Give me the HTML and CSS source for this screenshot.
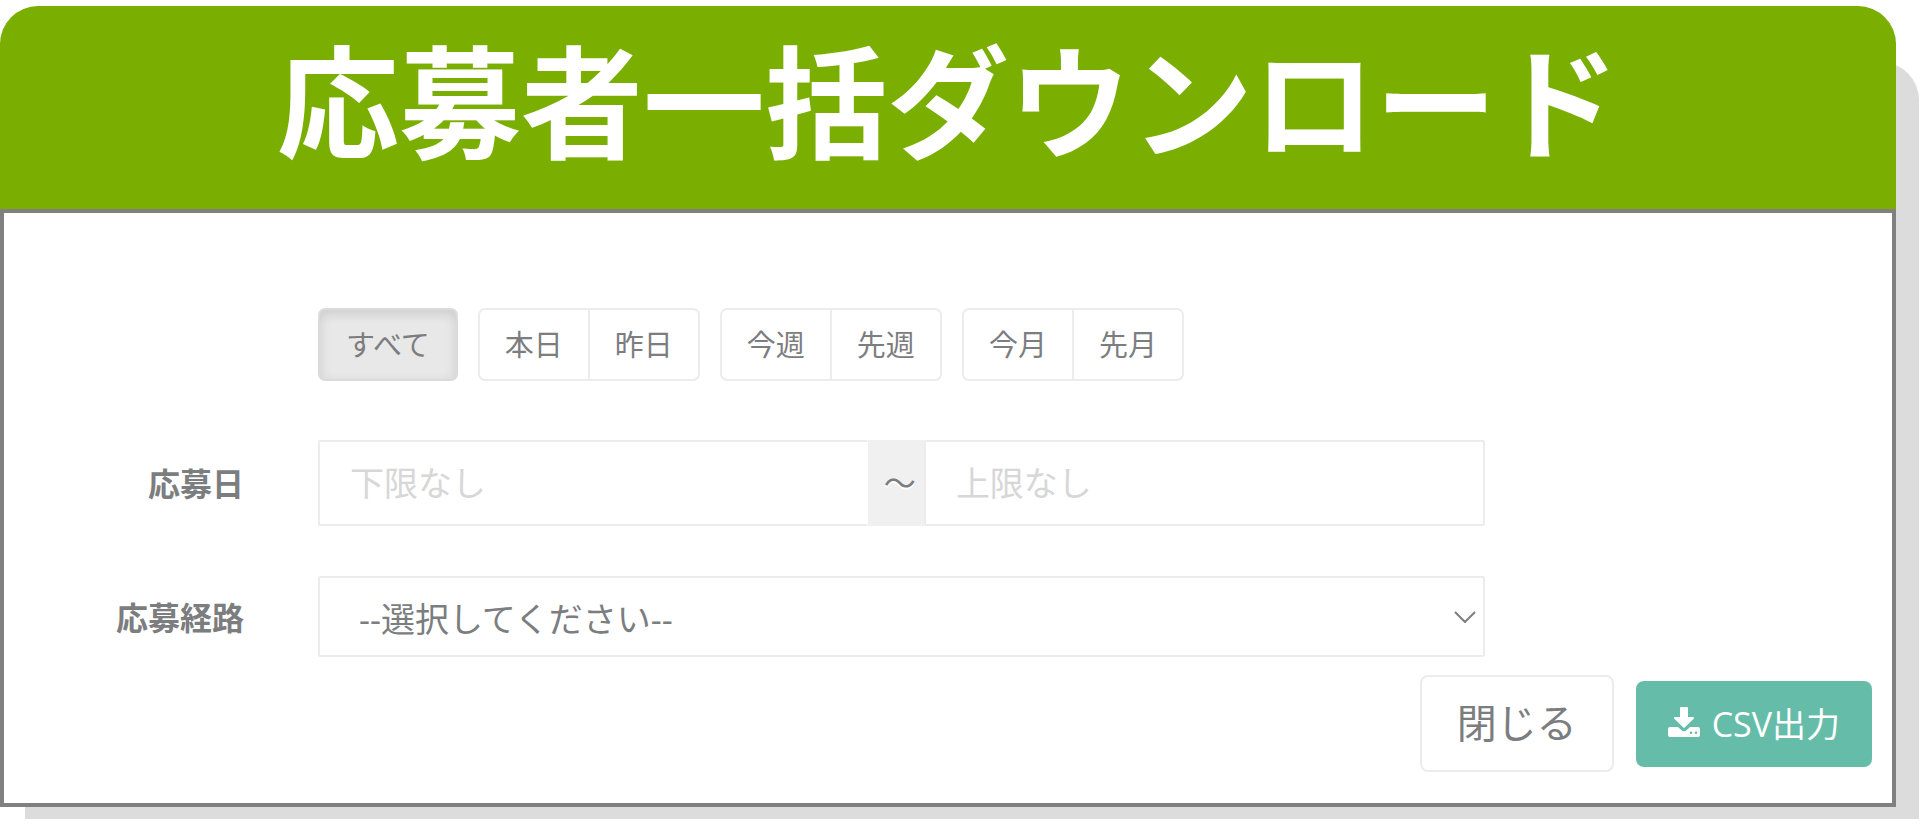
FILE: index.html
```html
<!DOCTYPE html>
<html lang="ja">
<head>
    <meta charset="UTF-8">
    <meta name="viewport" content="width=device-width, initial-scale=1.0">
    <title>応募者一括ダウンロード</title>
    <link rel="stylesheet" href="styles.css">
</head>
<body>
    <div class="modal">
        <header class="modal-header">
            <h1 class="modal-title">応募者一括ダウンロード</h1>
        </header>

        <form class="modal-body" action="/download" method="post">
            <!-- Period shortcuts -->
            <div class="period">
                <div class="btn-group">
                    <button type="button" class="btn active">すべて</button>
                </div>
                <div class="btn-group">
                    <button type="button" class="btn">本日</button>
                    <button type="button" class="btn">昨日</button>
                </div>
                <div class="btn-group">
                    <button type="button" class="btn">今週</button>
                    <button type="button" class="btn">先週</button>
                </div>
                <div class="btn-group">
                    <button type="button" class="btn">今月</button>
                    <button type="button" class="btn">先月</button>
                </div>
            </div>

            <!-- Date range -->
            <div class="form-row">
                <label class="form-label" for="date_from">応募日</label>
                <div class="date-range">
                    <input type="text" id="date_from" name="date_from" class="form-control" placeholder="下限なし">
                    <label class="range-mark" for="date_to">～</label>
                    <input type="text" id="date_to" name="date_to" class="form-control" placeholder="上限なし">
                </div>
            </div>

            <!-- Route -->
            <div class="form-row">
                <label class="form-label" for="route">応募経路</label>
                <div class="select-wrap">
                    <select id="route" name="route" class="form-control form-select">
                        <option value="">--選択してください--</option>
                    </select>
                    <svg class="select-arrow" viewBox="0 0 22 12" aria-hidden="true">
                        <path d="M1 1l10 10L21 1" fill="none" stroke="currentColor" stroke-width="2"/>
                    </svg>
                </div>
            </div>

            <div class="modal-footer">
                <button type="button" class="btn-close">閉じる</button>
                <button type="submit" class="btn-csv">
                    <svg class="icon" viewBox="0 0 32 30" aria-hidden="true">
                        <path fill="currentColor" d="M13 0h6a1 1 0 0 1 1 1v9h5c1 0 1.300 1 .7 1.700l-9 8.900a1 1 0 0 1-1.400 0l-9-8.900C5.700 11 6 10 7 10h5V1a1 1 0 0 1 1-1z"/>
                        <path fill="currentColor" fill-rule="evenodd" d="M2 20h8l3.500 3.200a3.700 3.700 0 0 0 5 0L22 20h8a2 2 0 0 1 2 2v6a2 2 0 0 1-2 2H2a2 2 0 0 1-2-2v-6a2 2 0 0 1 2-2zM23 24.500a1.300 1.300 0 1 0 0 2.600 1.300 1.300 0 0 0 0-2.600zM28 24.500a1.300 1.300 0 1 0 0 2.600 1.300 1.300 0 0 0 0-2.600z"/>
                    </svg>
                    CSV出力
                </button>
            </div>
        </form>
    </div>
</body>
</html>
```
FILE: styles.css
```css
* {
    box-sizing: border-box;
}

body {
    margin: 0;
    padding: 6px 24px 18px 0;
    background-color: #fff;
    color: #7c7d7f;
    font-family: "Open Sans", "Noto Sans CJK JP", sans-serif;
}

button,
input,
select {
    font-family: inherit;
    color: inherit;
}

.modal {
    position: relative;
}

/* flat shadow behind the dialog */
.modal::before {
    content: "";
    position: absolute;
    z-index: -1;
    top: 56px;
    right: -23px;
    bottom: -12px;
    left: 25px;
    border-top-right-radius: 38px;
    background-color: #dcdcdc;
}

.modal-header {
    padding: 8px 20px 19px;
    border-radius: 38px 38px 0 0;
    background-color: #7aae00;
}

.modal-title {
    margin: 0;
    color: #fff;
    font-size: 122px;
    font-weight: 700;
    line-height: 176px;
    text-align: center;
}

.modal-body {
    padding: 95px 20px 31px 0;
    border: 4px solid #808080;
    background-color: #fff;
}

.period {
    display: flex;
    gap: 20px;
    margin-bottom: 59px;
    padding-left: 314px;
}

.btn-group {
    display: flex;
}

.btn {
    height: 73px;
    padding: 0 25px 3px;
    border: 2px solid #ebecee;
    background-color: #fff;
    font-size: 29px;
}

.btn + .btn {
    margin-left: -2px;
}

.btn:first-child {
    border-top-left-radius: 7px;
    border-bottom-left-radius: 7px;
}

.btn:last-child {
    border-top-right-radius: 7px;
    border-bottom-right-radius: 7px;
}

.btn.active {
    padding: 0 26px 3px;
    border-color: #dbdbdb;
    background-color: #e8e8e8;
    box-shadow: inset 0 4px 12px rgba(0, 0, 0, 0.12);
}

.form-row {
    display: grid;
    grid-template-columns: 240px minmax(0, 1167px);
    column-gap: 74px;
    align-items: center;
    margin-bottom: 50px;
}

.form-label {
    padding-bottom: 2px;
    font-size: 32px;
    font-weight: 700;
    text-align: right;
}

.form-control {
    min-width: 0;
    width: 100%;
    height: 86px;
    padding: 0 30px;
    border: 2px solid #ebecec;
    border-radius: 2px;
    background-color: #fff;
    font-size: 34px;
}

.form-control::placeholder {
    color: #d7d7d7;
}

.date-range {
    display: grid;
    grid-template-columns: 49fr 56px 50fr;
}

.range-mark {
    display: flex;
    align-items: center;
    justify-content: flex-end;
    padding-right: 8px;
    padding-bottom: 4px;
    background-color: #f0f0f0;
    font-size: 32px;
    text-shadow: 0 2px 0 #fff;
}

.date-range .form-control:first-child {
    border-right: 0;
}

.select-wrap {
    position: relative;
}

.form-select {
    display: block;
    height: 81px;
    padding: 4px 39px 0;
    appearance: none;
}

.select-arrow {
    position: absolute;
    top: 35px;
    right: 9px;
    width: 22px;
    height: 12px;
    pointer-events: none;
}

.modal-footer {
    display: flex;
    align-items: center;
    justify-content: flex-end;
    gap: 22px;
    margin-top: -32px;
}

.btn-close {
    height: 97px;
    padding: 0 35px 5px;
    border: 2px solid #ebecee;
    border-radius: 8px;
    background-color: #fff;
    font-size: 40px;
}

.btn-csv {
    display: flex;
    align-items: center;
    gap: 12px;
    height: 86px;
    padding: 0 32px 3px;
    border: 0;
    border-radius: 8px;
    background-color: #65bda9;
    color: #fff;
    font-size: 34px;
}

.icon {
    width: 32px;
    height: 30px;
}
```
